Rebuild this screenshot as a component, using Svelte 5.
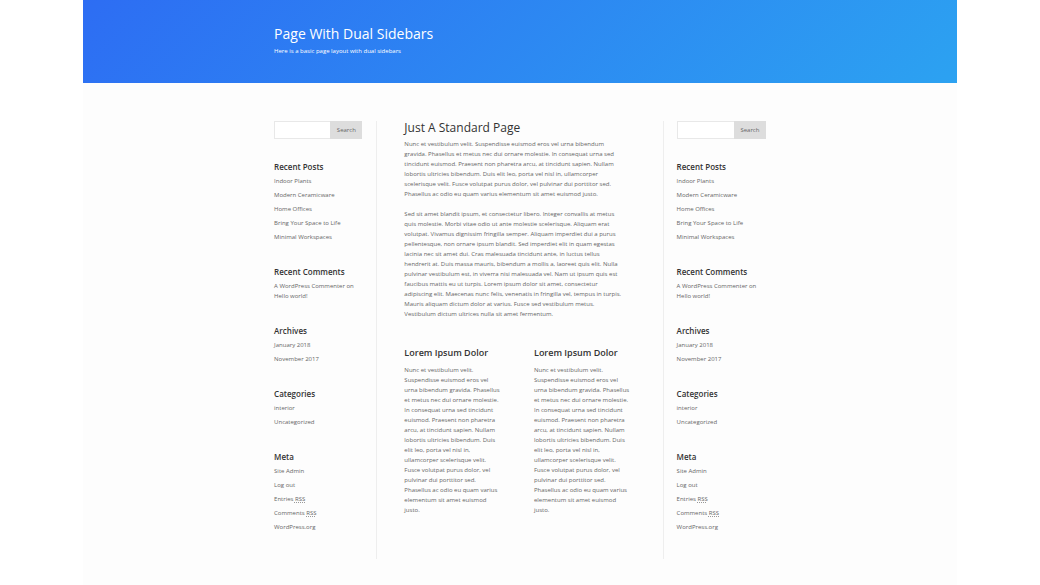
<script>
  const widgets = [
    {
      title: 'Recent Posts',
      links: ['Indoor Plants', 'Modern Ceramicware', 'Home Offices', 'Bring Your Space to Life', 'Minimal Workspaces']
    },
    { title: 'Recent Comments', comment: { author: 'A WordPress Commenter', post: 'Hello world!' } },
    { title: 'Archives', links: ['January 2018', 'November 2017'] },
    { title: 'Categories', links: ['interior', 'Uncategorized'] },
    { title: 'Meta', links: ['Site Admin', 'Log out', 'Entries RSS', 'Comments RSS', 'WordPress.org'] }
  ];

  // line breaks in the copy are kept by white-space: pre-line
  const intro = `Nunc et vestibulum velit. Suspendisse euismod eros vel urna bibendum
gravida. Phasellus et metus nec dui ornare molestie. In consequat urna sed
tincidunt euismod. Praesent non pharetra arcu, at tincidunt sapien. Nullam
lobortis ultricies bibendum. Duis elit leo, porta vel nisl in, ullamcorper
scelerisque velit. Fusce volutpat purus dolor, vel pulvinar dui porttitor sed.
Phasellus ac odio eu quam varius elementum sit amet euismod justo.`;

  const more = `Sed sit amet blandit ipsum, et consectetur libero. Integer convallis at metus
quis molestie. Morbi vitae odio ut ante molestie scelerisque. Aliquam erat
volutpat. Vivamus dignissim fringilla semper. Aliquam imperdiet dui a purus
pellentesque, non ornare ipsum blandit. Sed imperdiet elit in quam egestas
lacinia nec sit amet dui. Cras malesuada tincidunt ante, in luctus tellus
hendrerit at. Duis massa mauris, bibendum a mollis a, laoreet quis elit. Nulla
pulvinar vestibulum est, in viverra nisi malesuada vel. Nam ut ipsum quis est
faucibus mattis eu ut turpis. Lorem ipsum dolor sit amet, consectetur
adipiscing elit. Maecenas nunc felis, venenatis in fringilla vel, tempus in turpis.
Mauris aliquam dictum dolor at varius. Fusce sed vestibulum metus.
Vestibulum dictum ultrices nulla sit amet fermentum.`;

  const narrow = `Nunc et vestibulum velit.
Suspendisse euismod eros vel
urna bibendum gravida. Phasellus
et metus nec dui ornare molestie.
In consequat urna sed tincidunt
euismod. Praesent non pharetra
arcu, at tincidunt sapien. Nullam
lobortis ultricies bibendum. Duis
elit leo, porta vel nisl in,
ullamcorper scelerisque velit.
Fusce volutpat purus dolor, vel
pulvinar dui porttitor sed.
Phasellus ac odio eu quam varius
elementum sit amet euismod
justo.`;

  const columns = [
    { title: 'Lorem Ipsum Dolor', text: narrow },
    { title: 'Lorem Ipsum Dolor', text: narrow }
  ];
</script>

{#snippet sidebar(side)}
  <aside class="sidebar {side}">
    <form class="search" role="search">
      <input id="search-{side}" type="text" aria-label="Search" />
      <button type="button">Search</button>
    </form>

    {#each widgets as widget}
      <section class="widget">
        <h4>{widget.title}</h4>
        {#if widget.comment}
          <p><a href="#author">{widget.comment.author}</a> on <a href="#post">{widget.comment.post}</a></p>
        {:else}
          <ul>
            {#each widget.links as link}
              <li>
                {#if link.endsWith(' RSS')}
                  <a href="#feed">{link.replace(' RSS', '')} <abbr>RSS</abbr></a>
                {:else}
                  <a href="#link">{link}</a>
                {/if}
              </li>
            {/each}
          </ul>
        {/if}
      </section>
    {/each}
  </aside>
{/snippet}

<div class="page">
  <header>
    <div class="container">
      <h1>Page With Dual Sidebars</h1>
      <p>Here is a basic page layout with dual sidebars</p>
    </div>
  </header>

  <div class="container layout">
    {@render sidebar('left')}

    <main>
      <h2>Just A Standard Page</h2>
      <p>{intro}</p>
      <p>{more}</p>

      <div class="columns">
        {#each columns as column}
          <section>
            <h3>{column.title}</h3>
            <p>{column.text}</p>
          </section>
        {/each}
      </div>
    </main>

    {@render sidebar('right')}
  </div>
</div>

<style>
  :global(body) {
    background: #fff;
  }

  .page {
    width: 84%;
    margin: 0 auto;
    background: #fdfdfd;
    color: #666;
    font-family: 'Open Sans', sans-serif;
    font-size: 6px;
    line-height: 10px;
  }

  h1, h2, h3, h4, p, ul {
    margin: 0;
    padding: 0;
  }

  h2, h3, h4 {
    color: #333;
    font-weight: 500;
  }

  a {
    color: inherit;
    text-decoration: none;
  }

  .container {
    width: 56.3%;
    margin: 0 auto;
  }

  header {
    padding: 25px 0 27px;
    background: linear-gradient(135deg, #2d6df3 0%, #2ca2f1 100%);
    color: #fff;
  }

  h1 {
    font-size: 14px;
    line-height: 18px;
    font-weight: 400;
    margin-bottom: 3px;
  }

  .layout {
    display: grid;
    grid-template-columns: minmax(0, 21fr) minmax(0, 58fr) minmax(0, 21fr);
    padding: 38px 0 26px;
  }

  .sidebar {
    padding-bottom: 27px;
  }

  .sidebar.left {
    padding-right: 14px;
    border-right: 1px solid #eee;
  }

  .sidebar.right {
    padding-left: 13px;
    border-left: 1px solid #eee;
  }

  .search {
    display: flex;
    height: 18px;
    margin-bottom: 22px;
  }

  .search input {
    flex: 1;
    min-width: 0;
    box-sizing: border-box;
    padding: 0 4px;
    border: 1px solid #e8e8e8;
    border-right: 0;
    background: #fff;
    color: #666;
    font: inherit;
  }

  .search button {
    width: 32px;
    padding: 0;
    border: 0;
    background: #ddd;
    color: #666;
    font: inherit;
  }

  .widget {
    margin-bottom: 24px;
  }

  .widget:last-child {
    margin-bottom: 0;
  }

  h4 {
    font-size: 8px;
    line-height: 12px;
    font-weight: 600;
    margin-bottom: 3px;
  }

  ul {
    list-style: none;
  }

  li {
    margin-bottom: 4px;
  }

  li:last-child {
    margin-bottom: 0;
  }

  abbr {
    text-decoration: underline dotted #999;
    text-underline-offset: 1px;
  }

  main {
    padding: 0 27px;
  }

  h2 {
    font-size: 12px;
    line-height: 14px;
    margin-bottom: 4px;
  }

  main p {
    margin-bottom: 10px;
    white-space: pre-line;
  }

  .columns {
    display: grid;
    grid-template-columns: 1fr 1fr;
    gap: 28px;
    margin-top: 28px;
  }

  h3 {
    font-size: 9px;
    line-height: 12px;
    font-weight: 600;
    margin-bottom: 6px;
  }
</style>
